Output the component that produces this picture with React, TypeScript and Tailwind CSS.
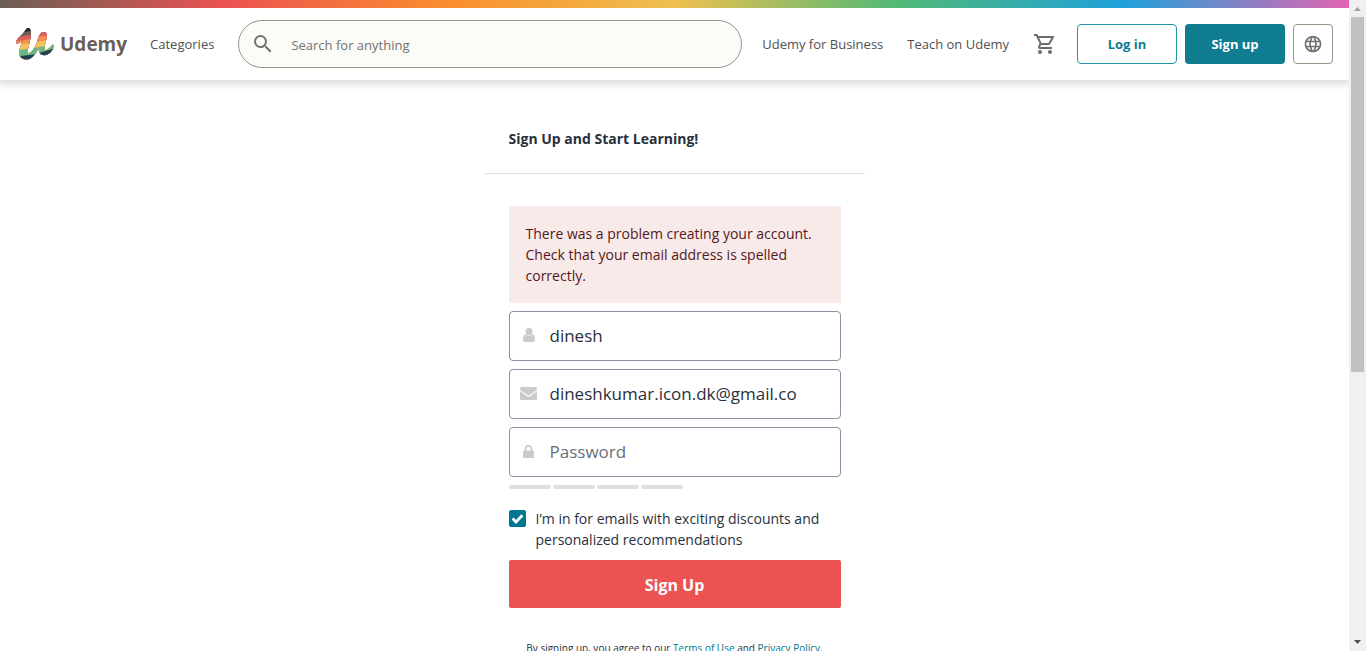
import React, { useState } from "react";
import { MdLanguage, MdOutlineShoppingCart, MdSearch } from "react-icons/md";

function LogoMark() {
  return (
    <svg viewBox="0 0 38 32" className="h-8 w-[38px] shrink-0" aria-hidden="true">
      <defs>
        <clipPath id="mark">
          <path d="M0.2 13.8C1.4 9.8 6.6 7 8.8 2.8C10 0.4 11.6 -0.4 13 0.1C14.8 0.8 15.1 3 14.9 6C14.7 10 13.6 15 12.6 18.8C11.6 22.4 10.8 25.2 12.2 25.4C15 25.6 19 20 20.8 14.8C22.4 9.6 24 4.4 27.2 4.1C30.6 3.9 31.2 6.6 30.6 10C29.8 14.4 27.8 19.6 28.6 21.4C29.8 23.2 34 20.2 35.8 17.4C36.6 16 38.4 16.8 37.8 18.8C36.4 23.6 32.4 27.2 28.4 27.2C24.4 27.2 22.8 24.6 22.8 20.8L23 19C19.8 26.4 15.6 31.6 10.4 31.6C5 31.6 2.8 27.6 3.4 23.2C3.8 19.8 5.2 16.6 5.8 13.6C4 14 3 15 2.2 15.6C1 16.4 -0.2 15.6 0.2 13.8Z" />
        </clipPath>
      </defs>
      <g clipPath="url(#mark)">
        <path fill="#26262b" d="M0 0H38V32H0Z" />
        <path fill="#6b6058" d="M0 5L38 0V32H0Z" />
        <path fill="#e35d5b" d="M0 9.5L18 6V0H38V32H0Z" />
        <path fill="#f0924f" d="M0 13.5L18 10.5V9L38 7V32H0Z" />
        <path fill="#f2c160" d="M0 17L18 14.5L38 11V32H0Z" />
        <path fill="#68b883" d="M0 22.5L18 20L38 16.5V32H0Z" />
        <path fill="#233f52" d="M0 28.5L18 26.5L38 20.5V32H0Z" />
      </g>
    </svg>
  );
}

function UserIcon() {
  return (
    <svg viewBox="0 0 12 14" className="h-[14px] w-3" fill="currentColor" aria-hidden="true">
      <rect x="2.6" y="0" width="6.8" height="7.6" rx="3.3" />
      <path d="M2.5 6.2C0.8 6.6 0 8.4 0 11.2C0 13 0.9 14 2.3 14H9.7C11.1 14 12 13 12 11.2C12 8.4 11.2 6.6 9.5 6.2C8.6 7.2 7.4 7.8 6 7.8C4.6 7.8 3.4 7.2 2.5 6.2Z" />
    </svg>
  );
}

function MailIcon() {
  return (
    <svg viewBox="0 0 17 13" className="h-[13px] w-[17px]" fill="currentColor" aria-hidden="true">
      <path d="M1.5 0H15.5C16.5 0 17 0.6 17 1.4C17 2.4 16.3 3.3 15.5 3.9L10 7.8C9.4 8.2 9 8.5 8.5 8.5S7.6 8.2 7 7.8L1.5 3.9C0.8 3.4 0 2.4 0 1.5C0 0.7 0.5 0 1.5 0Z" />
      <path d="M0 4.1C1.8 5.6 4.3 7.2 6.2 8.7C7 9.3 7.7 9.6 8.5 9.6S10 9.3 10.8 8.7C12.7 7.2 15.2 5.6 17 4.1V11.5C17 12.4 16.4 13 15.5 13H1.5C0.6 13 0 12.4 0 11.5Z" />
    </svg>
  );
}

function LockIcon() {
  return (
    <svg viewBox="0 0 11 13" className="h-[13px] w-[11px]" aria-hidden="true">
      <path d="M2.6 6.5V3.8C2.6 2 3.8 0.9 5.5 0.9S8.4 2 8.4 3.8V6.5" fill="none" stroke="currentColor" strokeWidth="1.8" />
      <rect x="0" y="5.6" width="11" height="7.4" rx="1" fill="currentColor" />
    </svg>
  );
}

type FieldProps = {
  id: string;
  label: string;
  type: string;
  icon: React.ReactNode;
  initial?: string;
};

function Field({ id, label, type, icon, initial = "" }: FieldProps) {
  const [value, setValue] = useState(initial);
  return (
    <div className="flex h-[50px] items-center rounded border border-[#8a92a3] bg-white pr-10">
      <label htmlFor={id} className="flex w-9 shrink-0 justify-center pb-[2px] pl-[2px] text-[#cacbcc]">
        {icon}
      </label>
      <input
        id={id}
        type={type}
        value={value}
        aria-label={label}
        placeholder={label}
        onChange={(e) => setValue(e.target.value)}
        className="h-full min-w-0 flex-1 bg-transparent pb-[2px] pl-1 text-[17px] text-[#29303b] outline-none placeholder:text-[#686f7a]"
      />
    </div>
  );
}

function Header() {
  return (
    <header className="relative shadow-[0_2px_8px_2px_rgba(0,0,0,0.15)]">
      <div className="h-2 bg-[linear-gradient(to_right,#6a5f55,#ec5252,#f98e2d,#efc04e,#50b977,#1fa1db,#e364b1)]" />
      <div className="flex h-[72px] items-center bg-white px-4 text-[13px] text-[#505050]">
        <a href="#" className="flex items-center gap-[6px]" aria-label="Udemy">
          <LogoMark />
          <span className="text-[19px] font-bold text-[#6a5f58]">Udemy</span>
        </a>
        <a href="#categories" className="ml-[23px] pt-[2px]">Categories</a>
        <form
          className="mr-5 ml-6 flex h-12 min-w-0 flex-1 items-center rounded-full border border-[#989586] bg-[#fbfbf8] pl-3"
          onSubmit={(e) => e.preventDefault()}
        >
          <button type="submit" aria-label="Submit search" className="text-[#73726c]">
            <MdSearch size={24} />
          </button>
          <input
            type="text"
            aria-label="Search for anything"
            placeholder="Search for anything"
            className="ml-4 h-full min-w-0 flex-1 bg-transparent pt-[2px] outline-none placeholder:text-[#73726c]"
          />
        </form>
        <nav className="flex gap-6 pt-[2px]">
          <a href="#business">Udemy for Business</a>
          <a href="#teach">Teach on Udemy</a>
        </nav>
        <button type="button" aria-label="Shopping cart" className="mr-3 ml-4 flex h-10 w-10 items-center justify-center text-[#6e6d67]">
          <MdOutlineShoppingCart size={24} />
        </button>
        <div className="flex gap-2 font-bold">
          <button type="button" className="h-10 w-[100px] rounded border border-[#2596a8] pt-[2px] text-[#0f7c90]">Log in</button>
          <button type="button" className="h-10 w-[100px] rounded bg-[#0f7c90] pt-[2px] text-white">Sign up</button>
          <button type="button" aria-label="Choose a language" className="flex h-10 w-10 items-center justify-center rounded border border-[#989586] text-[#73726c]">
            <MdLanguage size={20} />
          </button>
        </div>
      </div>
    </header>
  );
}

function SignUpForm() {
  const [optIn, setOptIn] = useState(true);
  return (
    <main className="mx-auto w-full max-w-[380px] pt-12 text-[14px] leading-[21px] text-[#29303b]">
      <h1 className="border-b border-[#dedfe0] px-6 pb-6 font-bold">
        Sign Up and Start Learning!
      </h1>
      <form className="flex flex-col gap-2 px-6 pt-8" onSubmit={(e) => e.preventDefault()}>
        <div role="alert" className="border border-[#f9eaea] bg-[#f9eaea] p-4 text-[#521822]">
          There was a problem creating your account. Check that your email address is spelled correctly.
        </div>
        <Field id="name" label="Full Name" type="text" icon={<UserIcon />} initial="dinesh" />
        <Field id="email" label="Email" type="text" icon={<MailIcon />} initial="dineshkumar.icon.dk@gmail.co" />
        <Field id="password" label="Password" type="password" icon={<LockIcon />} />
        <div className="flex gap-[2px]" aria-hidden="true">
          <span className="h-1 w-[42px] rounded-sm bg-[#dedfe0]" />
          <span className="h-1 w-[42px] rounded-sm bg-[#dedfe0]" />
          <span className="h-1 w-[42px] rounded-sm bg-[#dedfe0]" />
          <span className="h-1 w-[42px] rounded-sm bg-[#dedfe0]" />
        </div>
        <label className="mt-[11px] grid grid-cols-[17px_1fr] gap-x-[10px]">
          <input
            type="checkbox"
            checked={optIn}
            onChange={(e) => setOptIn(e.target.checked)}
            className="peer col-start-1 row-start-1 mt-[2px] h-[17px] w-[17px] appearance-none rounded-xs border border-[#007791] checked:bg-[#007791]"
          />
          <svg viewBox="0 0 17 17" className="pointer-events-none invisible col-start-1 row-start-1 mt-[2px] h-[17px] w-[17px] peer-checked:visible" aria-hidden="true">
            <path d="M3.6 8.6L7 11.9L13.4 5.2" fill="none" stroke="#fff" strokeWidth="2.8" />
          </svg>
          <span className="col-start-2 row-start-1">
            I’m in for emails with exciting discounts and personalized recommendations
          </span>
        </label>
        <button type="submit" className="mt-[2px] h-12 rounded-xs bg-[#ec5252] pt-[2px] text-base font-bold text-white">
          Sign Up
        </button>
      </form>
      <p className="pt-[30px] text-center text-[10px]">
        By signing up, you agree to our{" "}
        <a href="#terms" className="text-[#007791]">Terms of Use</a> and{" "}
        <a href="#privacy" className="text-[#007791]">Privacy Policy</a>.
      </p>
    </main>
  );
}

function ScrollTrack() {
  return (
    <div className="flex w-[17px] shrink-0 flex-col items-center bg-[#f0f0f0]" aria-hidden="true">
      <svg viewBox="0 0 17 17" className="h-[17px] w-[17px] shrink-0">
        <path d="M5 11H12L8.5 7Z" fill="#a3a3a3" />
      </svg>
      <div className="h-6/11 w-[13px] bg-[#c1c1c1]" />
      <svg viewBox="0 0 17 17" className="mt-auto h-[17px] w-[17px] shrink-0">
        <path d="M5 6H12L8.5 10Z" fill="#505050" />
      </svg>
    </div>
  );
}

export default function App() {
  return (
    <div className="flex h-screen overflow-hidden bg-white font-['Open_Sans','Noto_Sans',sans-serif]">
      <div className="min-w-0 flex-1 overflow-hidden">
        <Header />
        <SignUpForm />
      </div>
      <ScrollTrack />
    </div>
  );
}
